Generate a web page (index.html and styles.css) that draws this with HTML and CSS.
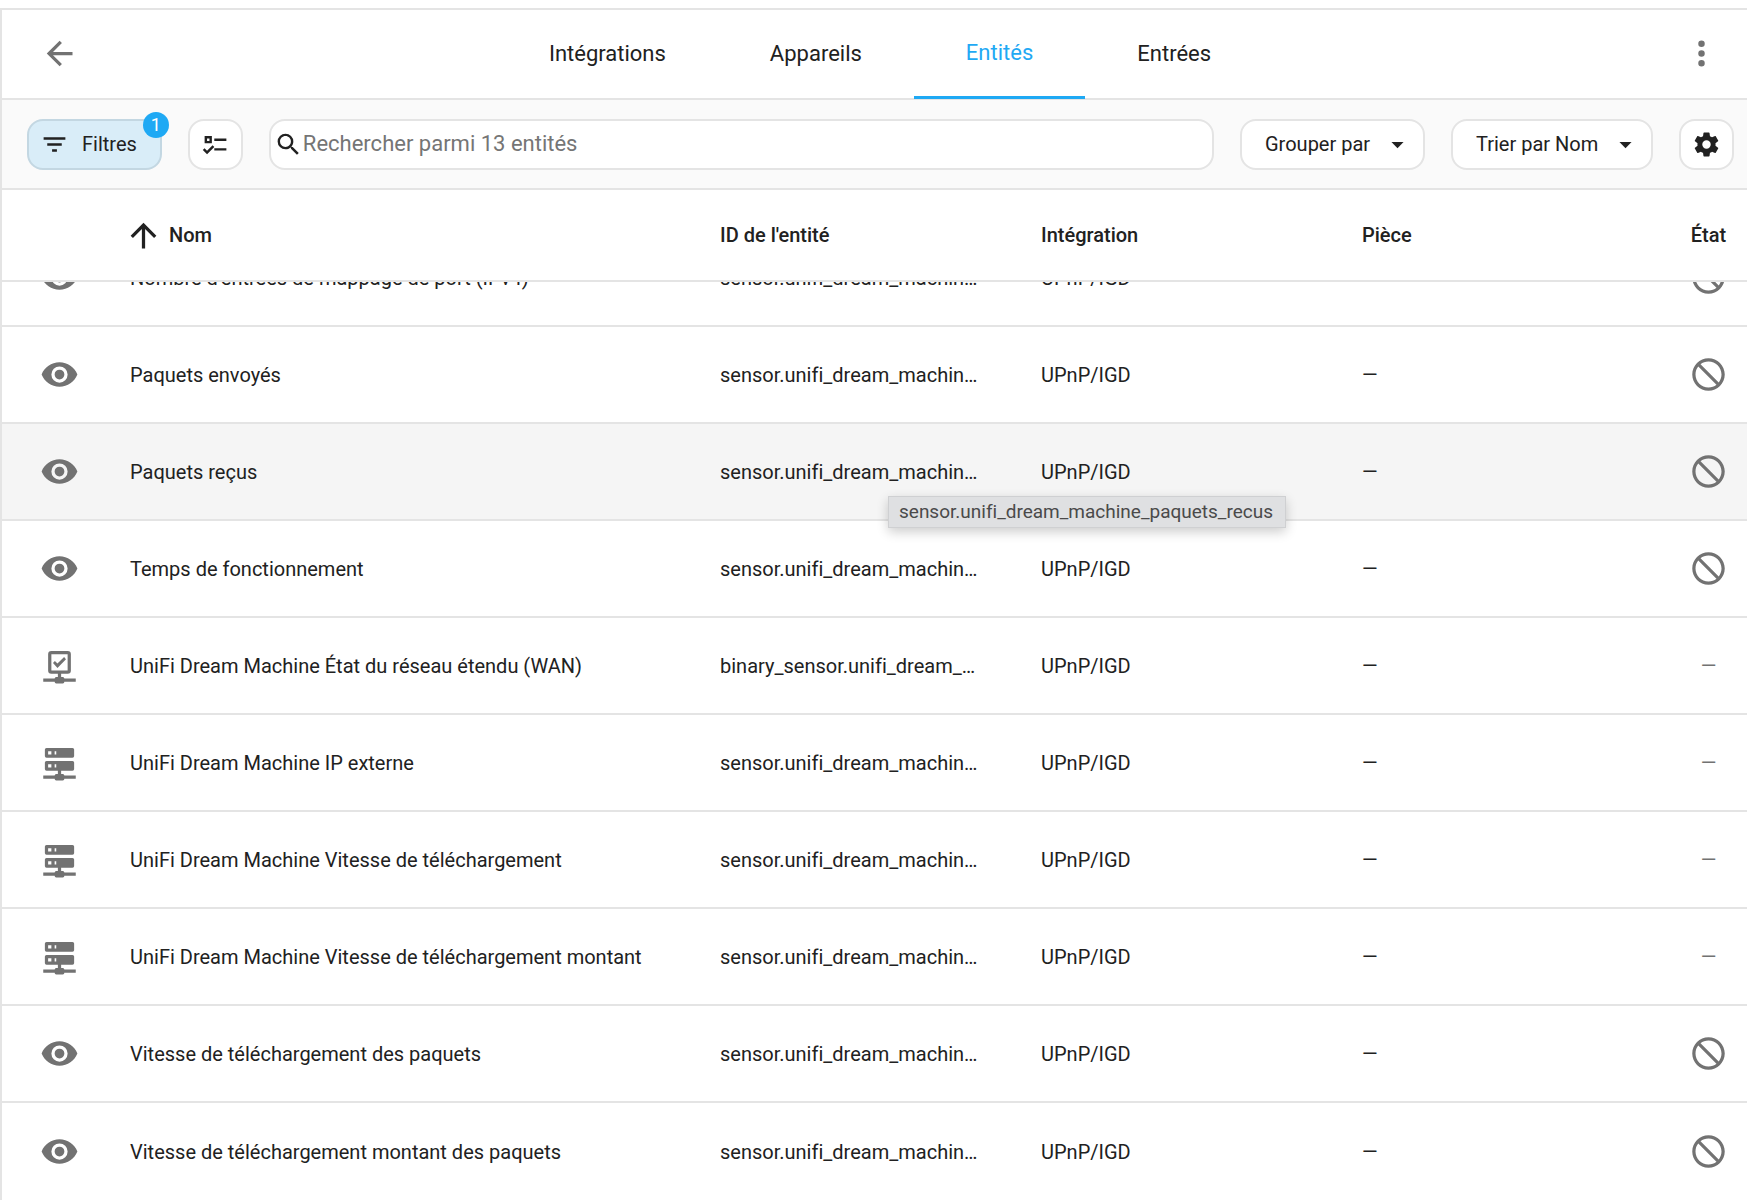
FILE: index.html
```html
<!DOCTYPE html>
<html lang="fr">
<head>
<meta charset="utf-8">
<meta name="viewport" content="width=device-width, initial-scale=1">
<title>Entités</title>
<link rel="stylesheet" href="styles.css">
</head>
<body>
<svg class="sprite" aria-hidden="true">
  <symbol id="eye" viewBox="0 0 24 24"><path d="M12,9A3,3 0 0,0 9,12A3,3 0 0,0 12,15A3,3 0 0,0 15,12A3,3 0 0,0 12,9M12,17A5,5 0 0,1 7,12A5,5 0 0,1 12,7A5,5 0 0,1 17,12A5,5 0 0,1 12,17M12,4.5C7,4.5 2.73,7.61 1,12C2.73,16.39 7,19.5 12,19.5C17,19.5 21.27,16.39 23,12C21.27,7.61 17,4.5 12,4.5Z"/></symbol>
  <symbol id="cancel" viewBox="0 0 24 24"><path d="M12 2C17.5 2 22 6.5 22 12S17.5 22 12 22 2 17.5 2 12 6.5 2 12 2M12 4C10.1 4 8.4 4.6 7.1 5.7L18.3 16.9C19.3 15.5 20 13.8 20 12C20 7.6 16.4 4 12 4M16.9 18.3L5.7 7.1C4.6 8.4 4 10.1 4 12C4 16.4 7.6 20 12 20C13.9 20 15.6 19.4 16.9 18.3Z"/></symbol>
  <symbol id="server" viewBox="0 0 24 24"><path d="M13,19H14A1,1 0 0,1 15,20H22V22H15A1,1 0 0,1 14,23H10A1,1 0 0,1 9,22H2V20H9A1,1 0 0,1 10,19H11V17H4A1,1 0 0,1 3,16V12A1,1 0 0,1 4,11H20A1,1 0 0,1 21,12V16A1,1 0 0,1 20,17H13V19M4,3H20A1,1 0 0,1 21,4V8A1,1 0 0,1 20,9H4A1,1 0 0,1 3,8V4A1,1 0 0,1 4,3M9,7H10V5H9V7M9,15H10V13H9V15M5,5V7H7V5H5M5,13V15H7V13H5Z"/></symbol>
  <symbol id="network" viewBox="0 0 24 24"><path d="M15,20A1,1 0 0,0 14,19H13V17H17A2,2 0 0,0 19,15V5A2,2 0 0,0 17,3H7A2,2 0 0,0 5,5V15A2,2 0 0,0 7,17H11V19H10A1,1 0 0,0 9,20H2V22H9A1,1 0 0,0 10,23H14A1,1 0 0,0 15,22H22V20H15M7,15V5H17V15H7M10.75,13.5L8,10.5L9.16,9.26L10.75,10.84L14.84,6.75L16,8.16L10.75,13.5Z"/></symbol>
</svg>

<div class="panel">
  <header class="topbar">
    <button class="icon-button" type="button" aria-label="Retour"><svg class="icon" viewBox="0 0 24 24"><path d="M20,11V13H8L13.5,18.5L12.08,19.92L4.16,12L12.08,4.08L13.5,5.5L8,11H20Z"/></svg></button>
    <nav class="tabs">
      <a class="tab" href="#integrations">Intégrations</a>
      <a class="tab" href="#appareils">Appareils</a>
      <a class="tab tab-active" href="#entites" aria-current="page">Entités</a>
      <a class="tab" href="#entrees">Entrées</a>
    </nav>
    <button class="icon-button" type="button" aria-label="Menu"><svg class="icon" viewBox="0 0 24 24"><path d="M12,16A2,2 0 0,1 14,18A2,2 0 0,1 12,20A2,2 0 0,1 10,18A2,2 0 0,1 12,16M12,10A2,2 0 0,1 14,12A2,2 0 0,1 12,14A2,2 0 0,1 10,12A2,2 0 0,1 12,10M12,4A2,2 0 0,1 14,6A2,2 0 0,1 12,8A2,2 0 0,1 10,6A2,2 0 0,1 12,4Z"/></svg></button>
  </header>

  <div class="toolbar">
    <button class="chip chip-filter" type="button"><svg class="icon-small" viewBox="0 0 24 24"><path d="M6,13H18V11H6M3,6V8H21V6M10,18H14V16H10V18Z"/></svg>Filtres<span class="badge">1</span></button>
    <button class="chip chip-square" type="button" aria-label="Mode sélection"><svg class="icon-small" viewBox="0 0 24 24"><path d="M3,5H9V11H3V5M5,7V9H7V7H5M11,7H21V9H11V7M11,15H21V17H11V15M5,20L1.5,16.5L2.91,15.09L5,17.17L9.59,12.59L11,14L5,20Z"/></svg></button>
    <label class="search"><svg class="icon-small" viewBox="0 0 24 24"><path d="M9.5,3A6.5,6.5 0 0,1 16,9.5C16,11.11 15.41,12.59 14.44,13.73L14.71,14H15.5L20.5,19L19,20.5L14,15.5V14.71L13.73,14.44C12.59,15.41 11.11,16 9.5,16A6.5,6.5 0 0,1 3,9.5A6.5,6.5 0 0,1 9.5,3M9.5,5C7,5 5,7 5,9.5C5,12 7,14 9.5,14C12,14 14,12 14,9.5C14,7 12,5 9.5,5Z"/></svg><input type="text" placeholder="Rechercher parmi 13 entités" aria-label="Rechercher"></label>
    <div class="picker"><select class="chip" aria-label="Grouper"><option>Grouper par</option></select><svg class="icon-small" viewBox="0 0 24 24"><path d="M7,10L12,15L17,10H7Z"/></svg></div>
    <div class="picker"><select class="chip" aria-label="Trier"><option>Trier par Nom</option></select><svg class="icon-small" viewBox="0 0 24 24"><path d="M7,10L12,15L17,10H7Z"/></svg></div>
    <button class="chip chip-square" type="button" aria-label="Paramètres"><svg class="icon-small" viewBox="0 0 24 24"><path d="M12,15.5A3.5,3.5 0 0,1 8.5,12A3.5,3.5 0 0,1 12,8.5A3.5,3.5 0 0,1 15.5,12A3.5,3.5 0 0,1 12,15.5M19.43,12.97C19.47,12.65 19.5,12.33 19.5,12C19.5,11.67 19.47,11.34 19.43,11L21.54,9.37C21.73,9.22 21.78,8.95 21.66,8.73L19.66,5.27C19.54,5.05 19.27,4.96 19.05,5.05L16.56,6.05C16.04,5.66 15.5,5.32 14.87,5.07L14.5,2.42C14.46,2.18 14.25,2 14,2H10C9.75,2 9.54,2.18 9.5,2.42L9.13,5.07C8.5,5.32 7.96,5.66 7.44,6.05L4.95,5.05C4.73,4.96 4.46,5.05 4.34,5.27L2.34,8.73C2.21,8.95 2.27,9.22 2.46,9.37L4.57,11C4.53,11.34 4.5,11.67 4.5,12C4.5,12.33 4.53,12.65 4.57,12.97L2.46,14.63C2.27,14.78 2.21,15.05 2.34,15.27L4.34,18.73C4.46,18.95 4.73,19.03 4.95,18.95L7.44,17.94C7.96,18.34 8.5,18.68 9.13,18.93L9.5,21.58C9.54,21.82 9.75,22 10,22H14C14.25,22 14.46,21.82 14.5,21.58L14.87,18.93C15.5,18.67 16.04,18.34 16.56,17.94L19.05,18.95C19.27,19.03 19.54,18.95 19.66,18.73L21.66,15.27C21.78,15.05 21.73,14.78 21.54,14.63L19.43,12.97Z"/></svg></button>
  </div>

  <table class="entities">
    <thead>
      <tr>
        <td></td>
        <th scope="col" aria-sort="ascending"><span class="sorted"><svg class="icon" viewBox="0 0 24 24"><path d="M13,20H11V8L5.5,13.5L4.08,12.08L12,4.16L19.92,12.08L18.5,13.5L13,8V20Z"/></svg>Nom</span></th>
        <th scope="col">ID de l'entité</th>
        <th scope="col">Intégration</th>
        <th scope="col">Pièce</th>
        <th scope="col" class="state">État</th>
      </tr>
    </thead>
    <tbody>
      <tr>
        <td class="kind"><svg class="icon"><use href="#eye"/></svg></td>
        <td>Nombre d'entrées de mappage de port (IPv4)</td>
        <td><span class="clip">sensor.unifi_dream_machine_nombre_d_entrees</span></td>
        <td>UPnP/IGD</td>
        <td>—</td>
        <td class="state"><svg class="icon"><use href="#cancel"/></svg></td>
      </tr>
      <tr>
        <td class="kind"><svg class="icon"><use href="#eye"/></svg></td>
        <td>Paquets envoyés</td>
        <td><span class="clip">sensor.unifi_dream_machine_paquets_envoyes</span></td>
        <td>UPnP/IGD</td>
        <td>—</td>
        <td class="state"><svg class="icon"><use href="#cancel"/></svg></td>
      </tr>
      <tr class="hovered">
        <td class="kind"><svg class="icon"><use href="#eye"/></svg></td>
        <td>Paquets reçus</td>
        <td><span class="clip">sensor.unifi_dream_machine_paquets_recus</span><span class="tooltip" role="tooltip">sensor.unifi_dream_machine_paquets_recus</span></td>
        <td>UPnP/IGD</td>
        <td>—</td>
        <td class="state"><svg class="icon"><use href="#cancel"/></svg></td>
      </tr>
      <tr>
        <td class="kind"><svg class="icon"><use href="#eye"/></svg></td>
        <td>Temps de fonctionnement</td>
        <td><span class="clip">sensor.unifi_dream_machine_temps_de_fonctionnement</span></td>
        <td>UPnP/IGD</td>
        <td>—</td>
        <td class="state"><svg class="icon"><use href="#cancel"/></svg></td>
      </tr>
      <tr>
        <td class="kind"><svg class="icon"><use href="#network"/></svg></td>
        <td>UniFi Dream Machine État du réseau étendu (WAN)</td>
        <td><span class="clip">binary_sensor.unifi_dream_machine_etat_du_reseau</span></td>
        <td>UPnP/IGD</td>
        <td>—</td>
        <td class="state">—</td>
      </tr>
      <tr>
        <td class="kind"><svg class="icon"><use href="#server"/></svg></td>
        <td>UniFi Dream Machine IP externe</td>
        <td><span class="clip">sensor.unifi_dream_machine_ip_externe</span></td>
        <td>UPnP/IGD</td>
        <td>—</td>
        <td class="state">—</td>
      </tr>
      <tr>
        <td class="kind"><svg class="icon"><use href="#server"/></svg></td>
        <td>UniFi Dream Machine Vitesse de téléchargement</td>
        <td><span class="clip">sensor.unifi_dream_machine_vitesse_de_telechargement</span></td>
        <td>UPnP/IGD</td>
        <td>—</td>
        <td class="state">—</td>
      </tr>
      <tr>
        <td class="kind"><svg class="icon"><use href="#server"/></svg></td>
        <td>UniFi Dream Machine Vitesse de téléchargement montant</td>
        <td><span class="clip">sensor.unifi_dream_machine_vitesse_de_telechargement_montant</span></td>
        <td>UPnP/IGD</td>
        <td>—</td>
        <td class="state">—</td>
      </tr>
      <tr>
        <td class="kind"><svg class="icon"><use href="#eye"/></svg></td>
        <td>Vitesse de téléchargement des paquets</td>
        <td><span class="clip">sensor.unifi_dream_machine_vitesse_des_paquets</span></td>
        <td>UPnP/IGD</td>
        <td>—</td>
        <td class="state"><svg class="icon"><use href="#cancel"/></svg></td>
      </tr>
      <tr>
        <td class="kind"><svg class="icon"><use href="#eye"/></svg></td>
        <td>Vitesse de téléchargement montant des paquets</td>
        <td><span class="clip">sensor.unifi_dream_machine_vitesse_montant_des_paquets</span></td>
        <td>UPnP/IGD</td>
        <td>—</td>
        <td class="state"><svg class="icon"><use href="#cancel"/></svg></td>
      </tr>
    </tbody>
  </table>
</div>
</body>
</html>
```
FILE: styles.css
```css
:root {
  --text: #212121;
  --muted: #727272;
  --line: #e4e4e4;
  --accent: #1fa9f4;
}

* {
  box-sizing: border-box;
}

body {
  margin: 0;
  padding-top: 8px;
  height: 100vh;
  overflow: hidden;
  background: #fff;
  color: var(--text);
  font-family: Roboto, sans-serif;
  font-size: 20px;
  font-variant-ligatures: none;
  line-height: 28px;
}

button,
input,
select {
  margin: 0;
  font: inherit;
  color: inherit;
}

.sprite {
  display: none;
}

.icon,
.icon-small {
  display: block;
  flex: none;
  fill: currentColor;
}

.icon {
  width: 39px;
  height: 39px;
}

.icon-small {
  width: 29px;
  height: 29px;
}

.panel {
  min-height: 100%;
  border-top: 2px solid var(--line);
  border-left: 2px solid var(--line);
}

/* Top bar */

.topbar {
  display: flex;
  align-items: center;
  height: 90px;
  padding: 0 7px 0 18px;
  border-bottom: 2px solid var(--line);
}

.icon-button {
  display: grid;
  place-items: center;
  width: 78px;
  height: 78px;
  margin-bottom: 2px;
  padding: 0;
  border: 0;
  background: none;
  color: var(--muted);
}

.tabs {
  display: flex;
  flex: 1;
  justify-content: center;
  align-self: stretch;
  margin-bottom: -1px;
  font-size: 22px;
}

.tab {
  display: flex;
  align-items: center;
  padding: 0 52px 2px;
  color: inherit;
  text-decoration: none;
}

.tab-active {
  padding-bottom: 0;
  border-bottom: 3px solid var(--accent);
  color: var(--accent);
}

/* Toolbar */

.toolbar {
  display: flex;
  align-items: center;
  gap: 26px;
  height: 90px;
  padding: 0 13px 0 25px;
  border-bottom: 2px solid var(--line);
  background: #fafafa;
}

.chip {
  display: flex;
  align-items: center;
  height: 51px;
  border: 2px solid var(--line);
  border-radius: 16px;
  background: #fff;
}

.chip-filter {
  position: relative;
  gap: 13px;
  padding: 0 23px 0 11px;
  border-color: #c3d7e2;
  background: #d9edf8;
}

.badge {
  position: absolute;
  top: -9px;
  right: -9px;
  width: 26px;
  height: 26px;
  border-radius: 50%;
  background: var(--accent);
  color: #fff;
  font-size: 18px;
  line-height: 26px;
  text-align: center;
}

.chip-square {
  justify-content: center;
  width: 55px;
  padding: 0;
}

.search {
  display: flex;
  flex: 1;
  align-items: center;
  height: 51px;
  padding-left: 3px;
  border: 2px solid var(--line);
  border-radius: 16px;
  background: #fff;
}

.search input {
  flex: 1;
  min-width: 0;
  padding: 0;
  border: 0;
  outline: 0;
  background: none;
  font-size: 22px;
}

.search input::placeholder {
  color: #757575;
  opacity: 1;
}

.picker {
  display: grid;
  align-items: center;
}

.picker > * {
  grid-area: 1 / 1;
}

.picker .chip {
  padding: 0 52px 0 23px;
  appearance: none;
}

.picker .icon-small {
  justify-self: end;
  margin-right: 13px;
  pointer-events: none;
}

/* Entity table */

.entities,
.entities thead,
.entities tbody {
  display: block;
}

.entities tr {
  display: grid;
  grid-template-columns: 102px minmax(0, 1fr) 321px 321px 321px 90px;
  align-items: center;
  height: 97px;
  border-bottom: 2px solid var(--line);
  background: #fff;
}

.entities thead {
  position: relative;
  z-index: 1;
}

.entities thead tr {
  height: 92px;
}

/* The list is scrolled part-way through its first visible row. */
.entities tbody {
  margin-top: -52px;
}

.entities tbody tr:last-child {
  border-bottom: 0;
}

.entities .hovered {
  background: #f5f5f5;
}

.entities th,
.entities td {
  position: relative;
  padding: 0 26px;
  font-weight: 400;
  text-align: left;
  white-space: nowrap;
}

.entities th {
  font-weight: 500;
}

.entities .kind {
  padding: 0 0 0 38px;
  color: var(--muted);
}

.entities .state {
  display: flex;
  justify-content: center;
  padding: 0 13px 0 26px;
}

.entities td.state {
  color: var(--muted);
}

.sorted {
  display: flex;
  align-items: center;
  gap: 6px;
  margin-left: -6px;
}

.clip {
  display: block;
  margin-right: 6px;
  overflow: hidden;
  text-overflow: ellipsis;
}

.tooltip {
  position: absolute;
  z-index: 2;
  top: 38px;
  left: 194px;
  padding: 0 12px 0 10px;
  border: 1px solid #cfd0d2;
  background: #dfe0e2;
  box-shadow: 0 4px 12px rgba(0, 0, 0, 0.2);
  color: #4a4a4a;
  font-size: 19px;
  line-height: 30px;
}
```
